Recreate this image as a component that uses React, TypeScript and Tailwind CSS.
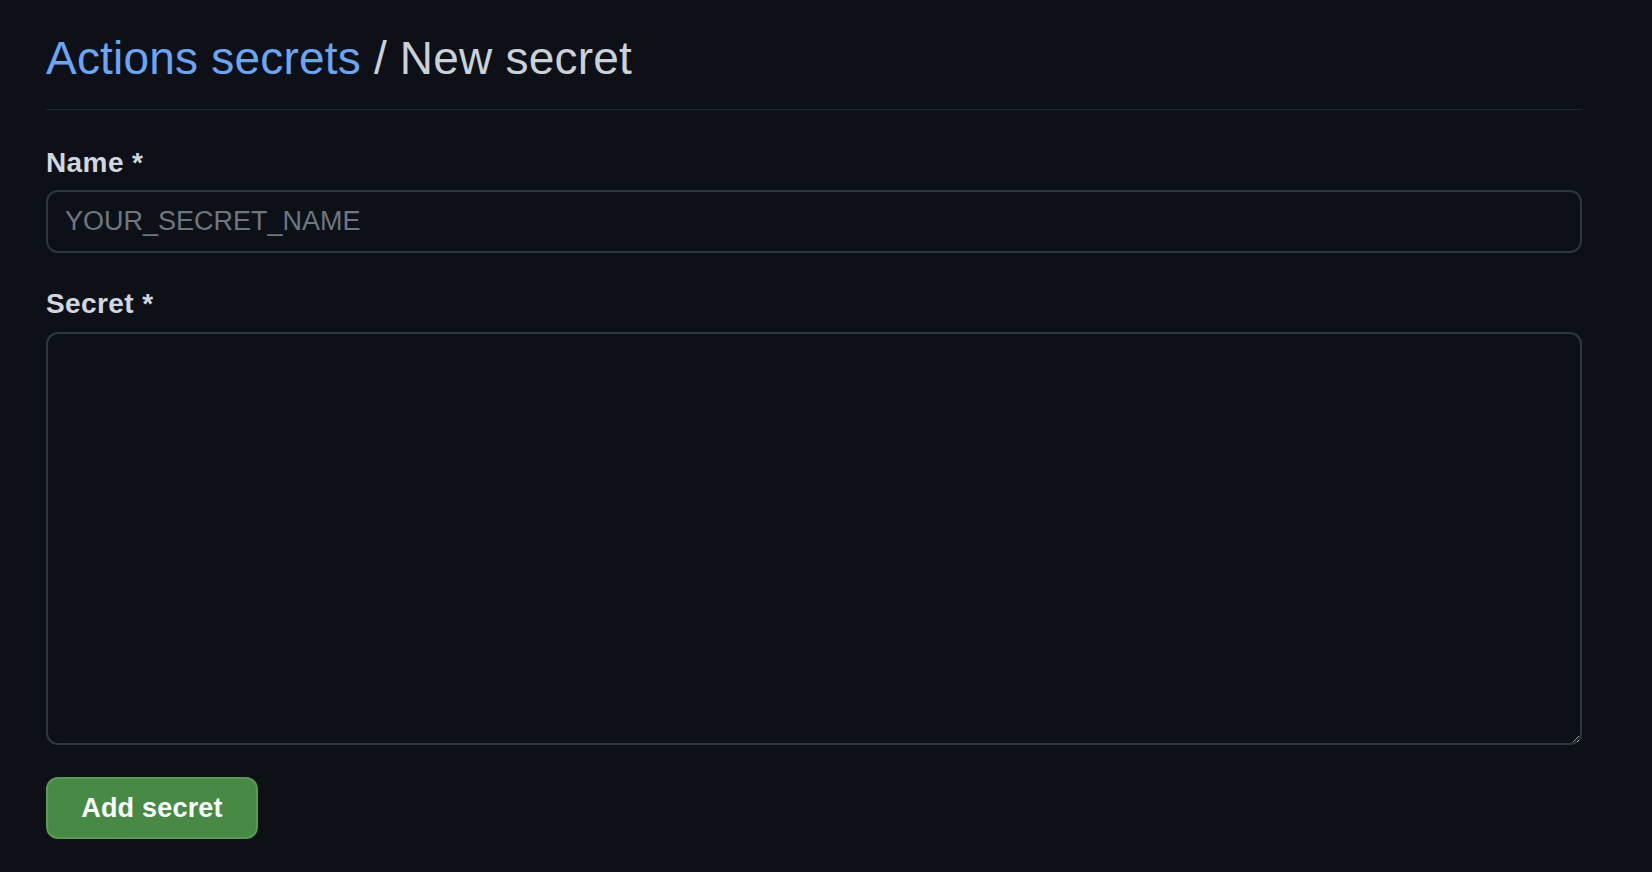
import React from "react";

export default function App() {
  return (
    <div
      className="min-h-[872px] w-full bg-[#0d1117] text-[#c9d1d9]"
      style={{ fontFamily: '"Liberation Sans", Arial, sans-serif' }}
    >
      <div className="ml-[46px] w-[1536px] pt-[29px]">
        <div className="border-b border-[#21262d] pb-[22px]">
          <h2 className="text-[46px] leading-[58px] font-normal tracking-[0.2px]">
            <a href="#" className="text-[#6aa5f8]">
              Actions secrets
            </a>{" "}
            / New secret
          </h2>
        </div>

        <form className="mt-[33px] flex flex-col">
          <label className="text-[28px] leading-[40px] font-bold tracking-[0.4px] text-[#d1d7de]">Name *</label>
          <input
            type="text"
            placeholder="YOUR_SECRET_NAME"
            className="mt-[7px] h-[63px] w-full rounded-[12px] border-2 border-[#30363d] bg-[#0d1117] px-[17px] text-[27px] text-[#c9d1d9] outline-none placeholder:text-[#6e7681]"
          />

          <label className="mt-[31px] text-[28px] leading-[40px] font-bold tracking-[0.4px] text-[#d1d7de]">Secret *</label>
          <textarea
            className="mt-[8px] h-[413px] w-full resize-y rounded-[12px] border-2 border-[#30363d] bg-[#0d1117] px-[17px] py-[12px] text-[27px] text-[#c9d1d9] outline-none [color-scheme:dark]"
          />

          <div className="mt-[32px]">
            <button
              type="button"
              className="flex h-[62px] w-[212px] items-center justify-center rounded-[12px] border-2 border-[#5a9a56] bg-[#468a44] text-[27px] font-bold tracking-[0.2px] text-white"
            >
              Add secret
            </button>
          </div>
        </form>
      </div>
    </div>
  );
}
